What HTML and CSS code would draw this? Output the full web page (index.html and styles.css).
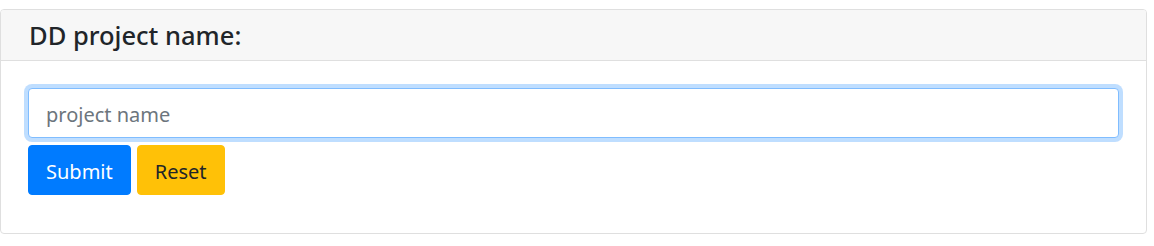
FILE: index.html
```html
<!DOCTYPE html>
<html>
<head>
<meta charset="utf-8">
<link rel="stylesheet" href="styles.css">
</head>
<body>
<div class="card">
  <div class="card-header">
    <h5 class="title">DD project name:</h5>
  </div>
  <div class="card-body">
    <form class="form">
      <input class="form-control" type="text" placeholder="project name">
      <div class="actions">
        <button type="button" class="btn btn-primary">Submit</button>
        <button type="reset" class="btn btn-warning">Reset</button>
      </div>
    </form>
  </div>
</div>
</body>
</html>
```
FILE: styles.css
```css
* { box-sizing: border-box; }
html, body { margin: 0; padding: 0; background: #fff; }
body {
  font-family: "Noto Sans", "Open Sans", sans-serif;
  color: #212529;
  padding-top: 9px;
}
.card {
  width: 1147px;
  height: 225px;
  border: 1px solid #dfdfdf;
  border-radius: 4px;
  background: #fff;
  overflow: hidden;
}
.card-header {
  background: #f7f7f7;
  border-bottom: 1px solid #dfdfdf;
  height: 51px;
  padding: 2px 28px 0;
  display: flex;
  align-items: center;
}
.title {
  margin: 0;
  font-size: 25.5px;
  font-weight: 500;
  line-height: 1;
  color: #212529;
}
.card-body {
  padding: 27px 27px 0 27px;
}
.form { margin: 0; }
.form-control {
  display: block;
  width: 1091px;
  height: 50px;
  padding: 3px 17px 0;
  font-family: inherit;
  font-size: 20px;
  color: #495057;
  background: #fff;
  border: 1px solid #80bdff;
  border-radius: 4px;
  box-shadow: 0 0 0 4px rgba(0,123,255,.25);
  outline: none;
}
.form-control::placeholder { color: #6c757d; }
.actions {
  display: flex;
  gap: 6px;
  margin-top: 7px;
}
.btn {
  height: 50px;
  padding: 2px 17px 0;
  font-family: inherit;
  font-size: 20px;
  border: 1px solid transparent;
  border-radius: 4px;
  cursor: pointer;
}
.btn-primary { background: #007bff; border-color: #007bff; color: #fff; }
.btn-warning { background: #ffc107; border-color: #ffc107; color: #212529; }
```
